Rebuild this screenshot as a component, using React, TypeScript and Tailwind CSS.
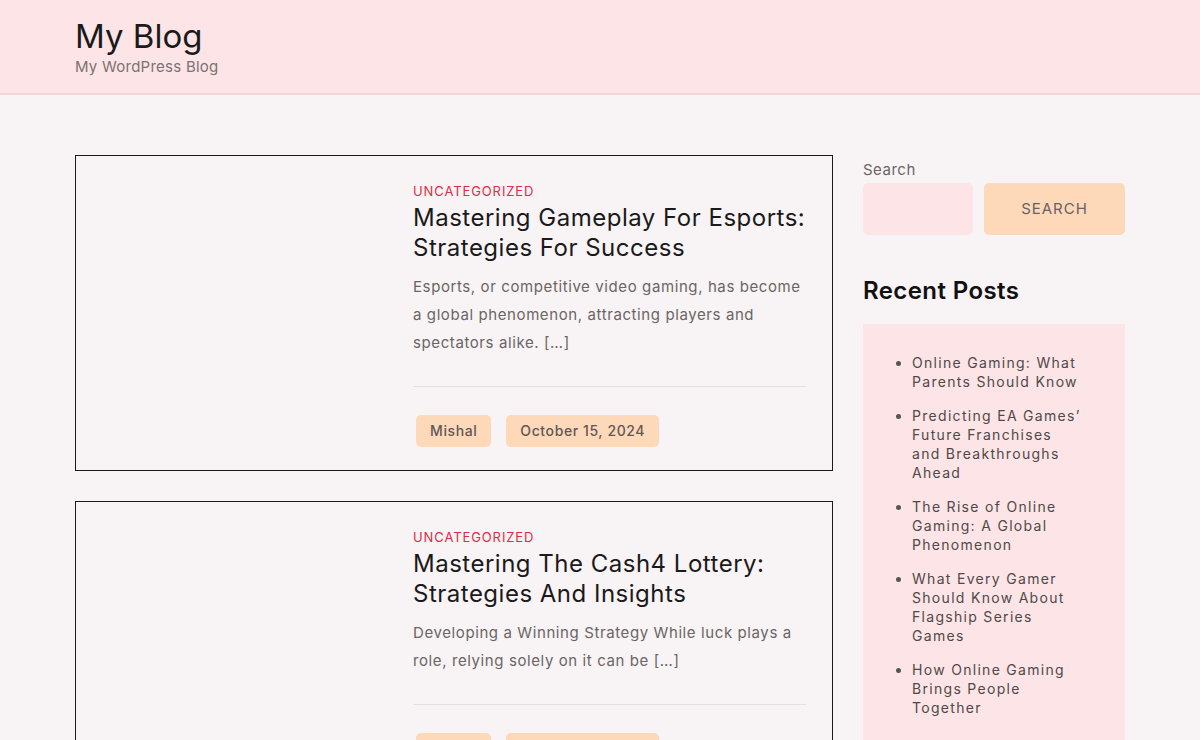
const posts = [
  {
    title: "Mastering Gameplay For Esports: Strategies For Success",
    excerpt:
      "Esports, or competitive video gaming, has become a global phenomenon, attracting players and spectators alike. […]",
    author: "Mishal",
    date: "October 15, 2024",
  },
  {
    title: "Mastering The Cash4 Lottery: Strategies And Insights",
    excerpt:
      "Developing a Winning Strategy While luck plays a role, relying solely on it can be […]",
    author: "Mishal",
    date: "October 15, 2024",
  },
];

const recent = [
  "Online Gaming: What Parents Should Know",
  "Predicting EA Games’ Future Franchises and Breakthroughs Ahead",
  "The Rise of Online Gaming: A Global Phenomenon",
  "What Every Gamer Should Know About Flagship Series Games",
  "How Online Gaming Brings People Together",
];

const PostCard = ({ post }: { post: (typeof posts)[number] }) => (
  <article className="flex border border-[#1a1a1a] pt-[25px] pb-[23px] pr-[26px]">
    <div className="w-[337px] shrink-0" />
    <div className="flex-1">
      <div className="text-[13px] leading-[20px] tracking-[0.9px] text-[#e02b45] uppercase">
        Uncategorized
      </div>
      <h2 className="mt-[2px] text-[24px] leading-[30px] text-[#1a1a1a] tracking-[0.5px]">
        {post.title}
      </h2>
      <p className="mt-[10px] text-[15px] leading-[28px] text-[#6b6565] tracking-[0.6px]">
        {post.excerpt}
      </p>
      <div className="mt-[29px] border-t border-[#e6e0e1]" />
      <div className="mt-[28px] flex gap-[15px] pl-[3px]">
        <span className="rounded-[5px] bg-[#fed9b9] px-[14px] py-[6px] text-[14px] leading-[20px] font-medium tracking-[0.6px] text-[#5f5757]">
          {post.author}
        </span>
        <span className="rounded-[5px] bg-[#fed9b9] px-[14px] py-[6px] text-[14px] leading-[20px] font-medium tracking-[0.6px] text-[#5f5757]">
          {post.date}
        </span>
      </div>
    </div>
  </article>
);

export default function App() {
  return (
    <div
      className="min-h-screen bg-[#f8f3f4]"
      style={{ fontFamily: '"Inter", "Noto Sans", sans-serif' }}
    >
      <header className="border-b-2 border-[#f0d8da] bg-[#fde4e6]">
        <div className="mx-auto w-[1050px] pt-[16px] pb-[15px]">
          <h1 className="text-[33px] leading-[40px] text-[#1a1a1a]">My Blog</h1>
          <p className="text-[15px] leading-[22px] tracking-[0.25px] text-[#7a7273]">
            My WordPress Blog
          </p>
        </div>
      </header>

      <div className="mx-auto flex w-[1050px] gap-[30px] pt-[60px]">
        <main className="flex w-[758px] flex-col gap-[30px]">
          {posts.map((p) => (
            <PostCard key={p.title} post={p} />
          ))}
        </main>

        <aside className="w-[262px] pt-[3px]">
          <label className="block text-[15px] leading-[24px] tracking-[0.5px] text-[#6b6565]">
            Search
          </label>
          <div className="mt-[1px] flex gap-[11px]">
            <input className="h-[52px] w-[110px] rounded-[5px] bg-[#fde4e6] outline-none" />
            <button className="h-[52px] flex-1 rounded-[5px] bg-[#fed9b9] text-[15px] tracking-[1px] text-[#6b6161] uppercase">
              Search
            </button>
          </div>

          <h2 className="mt-[40px] text-[24px] leading-[32px] font-semibold tracking-[0.4px] text-[#111]">
            Recent Posts
          </h2>
          <div className="mt-[17px] bg-[#fde4e6] pt-[29px] pr-[44px] pb-[30px] pl-[30px]">
            <ul className="list-disc pl-[19px] text-[#4f4949] marker:text-[#555]">
              {recent.map((r) => (
                <li
                  key={r}
                  className="mb-[15px] text-[14px] leading-[19px] tracking-[1.3px] last:mb-0"
                >
                  {r}
                </li>
              ))}
            </ul>
          </div>
        </aside>
      </div>
    </div>
  );
}
